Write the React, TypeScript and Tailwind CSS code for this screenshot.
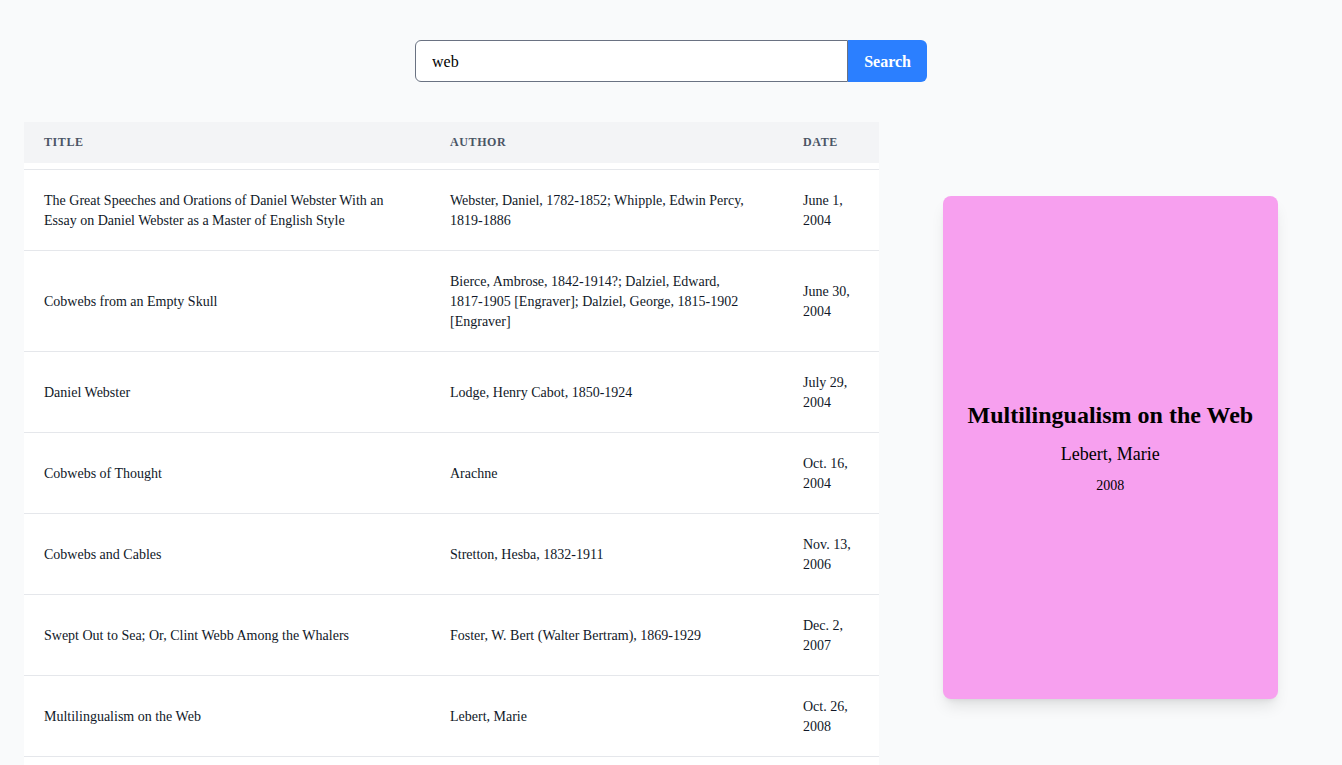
import React from "react";

const rows = [
  {
    title: "The Great Speeches and Orations of Daniel Webster With an Essay on Daniel Webster as a Master of English Style",
    author: "Webster, Daniel, 1782-1852; Whipple, Edwin Percy, 1819-1886",
    date: "June 1, 2004",
  },
  {
    title: "Cobwebs from an Empty Skull",
    author: "Bierce, Ambrose, 1842-1914?; Dalziel, Edward, 1817-1905 [Engraver]; Dalziel, George, 1815-1902 [Engraver]",
    date: "June 30, 2004",
  },
  { title: "Daniel Webster", author: "Lodge, Henry Cabot, 1850-1924", date: "July 29, 2004" },
  { title: "Cobwebs of Thought", author: "Arachne", date: "Oct. 16, 2004" },
  { title: "Cobwebs and Cables", author: "Stretton, Hesba, 1832-1911", date: "Nov. 13, 2006" },
  {
    title: "Swept Out to Sea; Or, Clint Webb Among the Whalers",
    author: "Foster, W. Bert (Walter Bertram), 1869-1929",
    date: "Dec. 2, 2007",
  },
  { title: "Multilingualism on the Web", author: "Lebert, Marie", date: "Oct. 26, 2008" },
];

export default function App() {
  return (
    <div className="min-h-screen bg-gray-50 font-['Liberation_Serif',serif] text-gray-900 overflow-hidden h-[765px]">
      <div className="pt-10 flex justify-center">
        <div className="flex w-[512px]">
          <input
            className="flex-1 min-w-0 h-[42px] px-4 pt-[2px] text-base text-black bg-white border border-gray-500 rounded-l-md outline-none"
            defaultValue="web"
          />
          <button className="h-[42px] px-4 pt-[2px] bg-blue-500 text-white font-bold text-base rounded-r-md">Search</button>
        </div>
      </div>
      <div className="mt-10 px-6 grid grid-cols-3 gap-6">
        <div className="col-span-2 bg-white">
          <div className="grid grid-cols-[406px_353px_1fr] h-[41px] pb-[2px] items-center bg-gray-100 text-xs font-bold uppercase tracking-wider text-gray-600">
            <div className="px-5">Title</div>
            <div className="px-5">Author</div>
            <div className="px-5">Date</div>
          </div>
          <div className="pt-[6px]">
            {rows.map((r, i) => (
              <div
                key={i}
                className="grid grid-cols-[406px_353px_1fr] items-center border-t border-gray-200 last:border-b pt-[21px] pb-[19px] text-sm leading-5 text-gray-900"
              >
                <div className="px-5">{r.title}</div>
                <div className="pl-5 pr-[34px]">{r.author}</div>
                <div className="px-5">{r.date}</div>
              </div>
            ))}
          </div>
          <div className="h-6" />
        </div>
        <div className="col-span-1 px-10 pt-[74px]">
          <div className="aspect-[2/3] rounded-lg bg-[#f7a0ef] shadow-lg flex flex-col items-center justify-center text-center text-black px-4">
            <div className="text-2xl font-bold leading-8 mb-[1px]">Multilingualism on the Web</div>
            <div className="mt-2 text-lg leading-7">Lebert, Marie</div>
            <div className="mt-2 text-sm leading-5">2008</div>
          </div>
        </div>
      </div>
    </div>
  );
}
